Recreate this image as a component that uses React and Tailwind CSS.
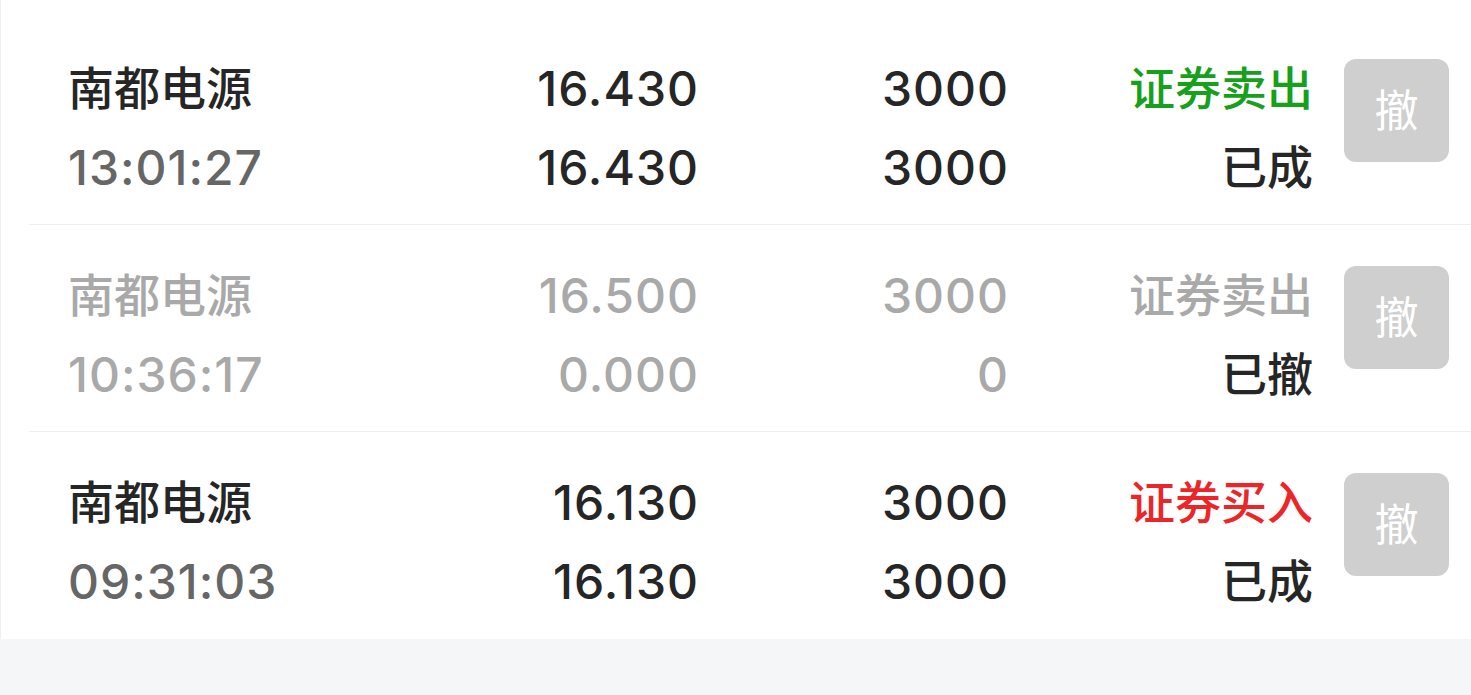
import React from "react";

const orders = [
  {
    name: "南都电源",
    time: "13:01:27",
    price: "16.430",
    dealPrice: "16.430",
    qty: "3000",
    dealQty: "3000",
    side: "证券卖出",
    status: "已成",
    tone: "sell",
  },
  {
    name: "南都电源",
    time: "10:36:17",
    price: "16.500",
    dealPrice: "0.000",
    qty: "3000",
    dealQty: "0",
    side: "证券卖出",
    status: "已撤",
    tone: "cancel",
  },
  {
    name: "南都电源",
    time: "09:31:03",
    price: "16.130",
    dealPrice: "16.130",
    qty: "3000",
    dealQty: "3000",
    side: "证券买入",
    status: "已成",
    tone: "buy",
  },
];

function OrderRow({ order, last }) {
  const dim = order.tone === "cancel";
  const main = dim ? "text-[#a9a9a9]" : "text-[#262626]";
  const sub = dim ? "text-[#a9a9a9]" : "text-[#666666]";
  const side =
    order.tone === "sell"
      ? "text-[#17a01c]"
      : order.tone === "buy"
      ? "text-[#ec2628]"
      : "text-[#a9a9a9]";

  return (
    <div className={`ml-[28px] h-[207px] ${last ? "" : "border-b border-[#efefef]"}`}>
      <div className="flex items-start pl-[39px] pt-[31px] leading-[79px] text-[46px]">
        {/* name + time */}
        <div className="w-[331px] flex flex-col">
          <span className={`font-medium ${main}`}>{order.name}</span>
          <span className={`font-medium text-[48px] tracking-[1px] ${sub}`}>{order.time}</span>
        </div>

        {/* price */}
        <div className={`w-[300px] flex flex-col items-end font-medium text-[48px] tracking-[1px] ${main}`}>
          <span>{order.price}</span>
          <span>{order.dealPrice}</span>
        </div>

        {/* quantity */}
        <div className={`w-[310px] flex flex-col items-end font-medium text-[48px] tracking-[1px] ${main}`}>
          <span>{order.qty}</span>
          <span>{order.dealQty}</span>
        </div>

        {/* side + status */}
        <div className="w-[304px] flex flex-col items-end font-medium">
          <span className={side}>{order.side}</span>
          <span className="text-[#262626]">{order.status}</span>
        </div>

        <button className="ml-[31px] mt-[10px] w-[105px] h-[103px] rounded-[12px] bg-[#cfcfcf] text-white text-[44px] leading-none flex items-center justify-center">
          撤
        </button>
      </div>
    </div>
  );
}

export default function App() {
  return (
    <div
      className="w-[1471px] h-[695px] flex flex-col bg-white overflow-hidden"
      style={{ fontFamily: 'Inter, "Noto Sans CJK SC", sans-serif' }}
    >
      <div className="pt-[18px] bg-white border-l border-[#f0f0f0]">
        {orders.map((o, i) => (
          <OrderRow key={i} order={o} last={i === orders.length - 1} />
        ))}
      </div>
      <div className="flex-1 bg-[#f5f6f8]" />
    </div>
  );
}
